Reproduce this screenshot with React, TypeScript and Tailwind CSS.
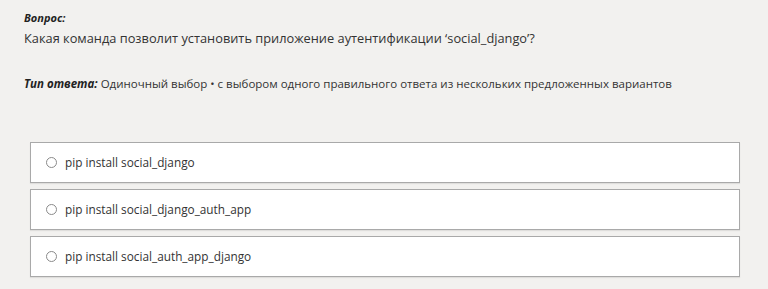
const options = [
  'pip install social_django',
  'pip install social_django_auth_app',
  'pip install social_auth_app_django',
];

export default function App() {
  return (
    <div
      className="w-[768px] h-[289px] bg-[#f2f1ef] text-[#333333] overflow-hidden"
      style={{ fontFamily: '"Open Sans", "Noto Sans", sans-serif' }}
    >
      <div className="pl-6 pt-[10px]">
        <div className="text-[11px] leading-[16px] font-bold italic text-[#222]">Вопрос:</div>
        <div className="text-[12.8px] leading-[20px] mt-[2px]">
          Какая команда позволит установить приложение аутентификации ‘social_django’?
        </div>
        <div className="text-[11.5px] leading-[17px] mt-[27px]">
          <span className="font-bold italic text-[#222]">Тип ответа:</span> Одиночный выбор • с выбором одного правильного ответа из нескольких предложенных вариантов
        </div>
      </div>

      <div className="flex flex-col gap-[6px] mt-[50px] ml-[30px] w-[710px]">
        {options.map((opt) => (
          <div
            key={opt}
            className="h-[41px] bg-white border border-[#a9a9a9] shadow-[0_1px_1px_rgba(0,0,0,0.08)] flex items-center pl-[15px]"
          >
            <span className="w-[11px] h-[11px] rounded-full border border-[#8a8a8a] bg-white shrink-0" />
            <span className="ml-[8px] text-[11.8px] text-[#333]">{opt}</span>
          </div>
        ))}
      </div>
    </div>
  );
}
